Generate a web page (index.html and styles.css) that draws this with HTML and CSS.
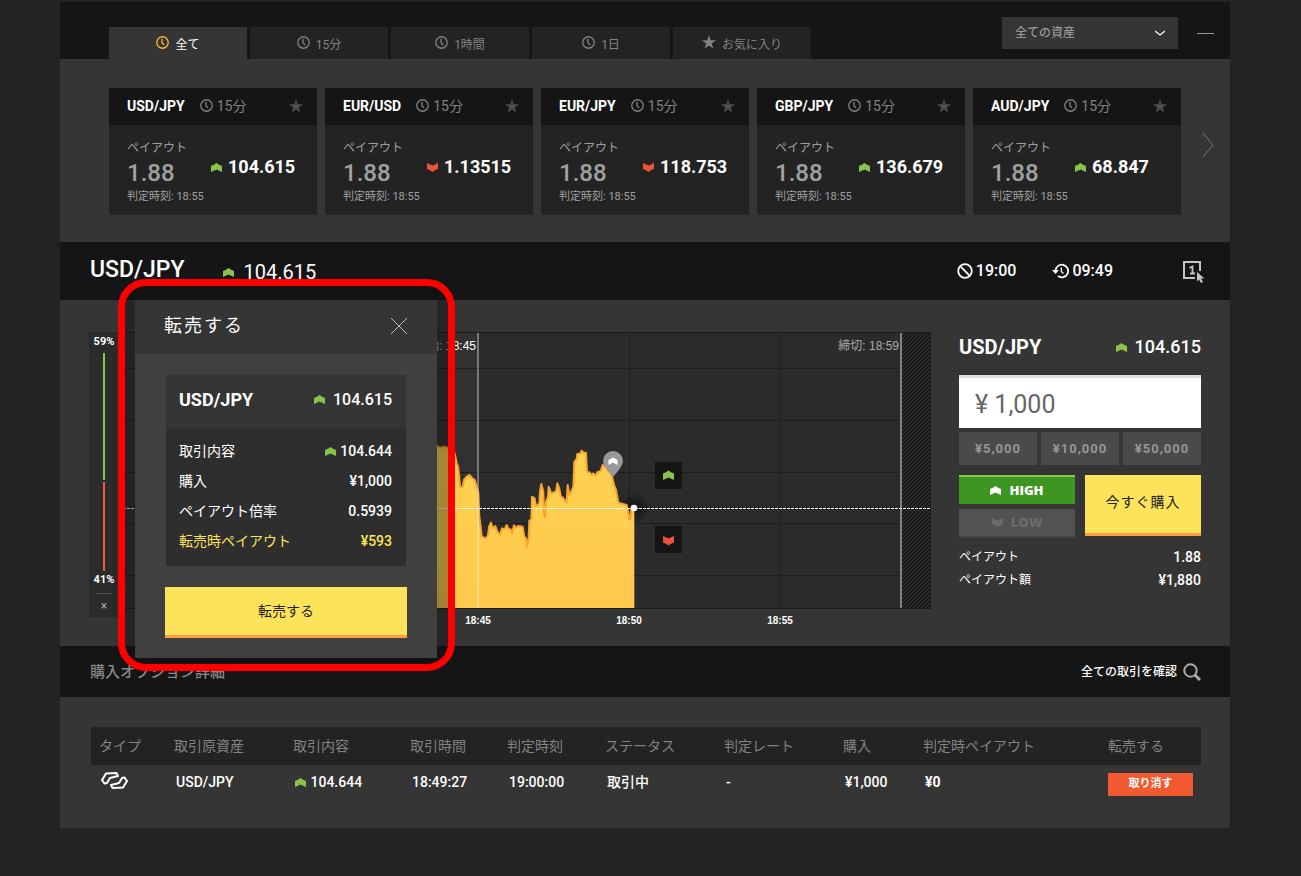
FILE: index.html
```html
<!DOCTYPE html>
<html lang="ja">
<head>
<meta charset="utf-8">
<title>USD/JPY 転売する</title>
<link rel="stylesheet" href="styles.css">
</head>
<body>
<svg class="defs" aria-hidden="true">
  <symbol id="up" viewBox="0 0 11 9"><path d="M0 3Q3 2 5.500 0Q8 2 11 3V9L5.500 6.500L0 9Z"/></symbol>
  <symbol id="down" viewBox="0 0 11 9"><path d="M0 0L5.500 2.500L11 0V6Q8 7 5.500 9Q3 7 0 6Z"/></symbol>
  <symbol id="clock" viewBox="0 0 12 12"><g fill="none" stroke="currentColor" stroke-width="1.200"><circle cx="6" cy="6" r="5.300"/><path d="M5.500 2.500V6L7.500 8.500"/></g></symbol>
  <symbol id="star" viewBox="0 0 14 14"><path d="M7 0L8.700 5.200H14L9.700 8.400L11.300 13.600L7 10.400L2.700 13.600L4.300 8.400L0 5.200H5.300Z"/></symbol>
</svg>
<div class="app">
  <header class="topbar">
    <nav class="tabs">
      <button class="tab active"><svg class="i12"><use href="#clock"/></svg><span>全て</span></button>
      <button class="tab"><svg class="i12"><use href="#clock"/></svg><span>15分</span></button>
      <button class="tab"><svg class="i12"><use href="#clock"/></svg><span>1時間</span></button>
      <button class="tab"><svg class="i12"><use href="#clock"/></svg><span>1日</span></button>
      <button class="tab"><svg class="i14"><use href="#star"/></svg><span>お気に入り</span></button>
    </nav>
    <div class="filter">
      <div class="select">
        <select aria-label="資産"><option>全ての資産</option></select>
        <svg class="chev" viewBox="0 0 10 6"><path d="M0 1L5 5L10 1"/></svg>
      </div>
      <button class="minimize" aria-label="最小化"><svg viewBox="0 0 17 2"><path d="M0 1.500H17"/></svg></button>
    </div>
  </header>

  <section class="assets">
    <div class="cards">
      <article class="card">
        <div class="card-head"><b>USD/JPY</b><span class="term"><svg class="i12"><use href="#clock"/></svg>15分</span><svg class="i14 fav"><use href="#star"/></svg></div>
        <div class="card-body"><div class="pay">ペイアウト</div><div class="rate">1.88</div><div class="price"><svg class="arrow up"><use href="#up"/></svg>104.615</div><div class="expiry">判定時刻: 18:55</div></div>
      </article>
      <article class="card">
        <div class="card-head"><b>EUR/USD</b><span class="term"><svg class="i12"><use href="#clock"/></svg>15分</span><svg class="i14 fav"><use href="#star"/></svg></div>
        <div class="card-body"><div class="pay">ペイアウト</div><div class="rate">1.88</div><div class="price"><svg class="arrow down"><use href="#down"/></svg>1.13515</div><div class="expiry">判定時刻: 18:55</div></div>
      </article>
      <article class="card">
        <div class="card-head"><b>EUR/JPY</b><span class="term"><svg class="i12"><use href="#clock"/></svg>15分</span><svg class="i14 fav"><use href="#star"/></svg></div>
        <div class="card-body"><div class="pay">ペイアウト</div><div class="rate">1.88</div><div class="price"><svg class="arrow down"><use href="#down"/></svg>118.753</div><div class="expiry">判定時刻: 18:55</div></div>
      </article>
      <article class="card">
        <div class="card-head"><b>GBP/JPY</b><span class="term"><svg class="i12"><use href="#clock"/></svg>15分</span><svg class="i14 fav"><use href="#star"/></svg></div>
        <div class="card-body"><div class="pay">ペイアウト</div><div class="rate">1.88</div><div class="price"><svg class="arrow up"><use href="#up"/></svg>136.679</div><div class="expiry">判定時刻: 18:55</div></div>
      </article>
      <article class="card">
        <div class="card-head"><b>AUD/JPY</b><span class="term"><svg class="i12"><use href="#clock"/></svg>15分</span><svg class="i14 fav"><use href="#star"/></svg></div>
        <div class="card-body"><div class="pay">ペイアウト</div><div class="rate">1.88</div><div class="price"><svg class="arrow up"><use href="#up"/></svg>68.847</div><div class="expiry">判定時刻: 18:55</div></div>
      </article>
    </div>
    <button class="next" aria-label="次へ"><svg viewBox="0 0 12 26"><path d="M1 1L11 13L1 25"/></svg></button>
  </section>

  <section class="pairbar">
    <h1>USD/JPY</h1>
    <div class="quote"><svg class="arrow up"><use href="#up"/></svg>104.615</div>
    <div class="times">
      <span class="time"><svg class="i16" viewBox="0 0 16 16"><g fill="none" stroke="#fff" stroke-width="1.800"><circle cx="8" cy="8" r="6.800"/><path d="M3.200 3.200L12.800 12.800"/></g></svg>19:00</span>
      <span class="time"><svg class="hist" viewBox="0 0 17 16"><path d="M3.500 8A6.300 6.300 0 1 1 6 13" fill="none" stroke="#fff" stroke-width="1.800"/><path d="M0 7H7L3.500 11Z" fill="#fff"/><path d="M9.300 4.500V8.500L11.500 10.500" fill="none" stroke="#fff" stroke-width="1.300"/></svg>09:49</span>
    </div>
    <button class="oneclick" aria-label="ワンクリック"><svg viewBox="0 0 22 24"><path d="M17 11V2H1V18H12" fill="none" stroke="#c4c4c4" stroke-width="2"/><path d="M6.500 8L9.500 6.500V14M7 13.500H12" fill="none" stroke="#c4c4c4" stroke-width="1.800"/><path d="M14 12L21.500 18.500H18L20 22L18 23L16 19.500L14 21.500Z" fill="#c4c4c4"/></svg></button>
  </section>

  <main class="trade">
    <div class="gauge">
      <b>59%</b>
      <span class="bar high"></span>
      <span class="bar low"></span>
      <b>41%</b>
      <button aria-label="閉じる">×</button>
    </div>
    <svg class="chart" viewBox="0 0 812 300" role="img" aria-label="USD/JPY チャート">
      <defs>
        <pattern id="hatch" width="4" height="4" patternUnits="userSpaceOnUse"><rect width="4" height="4" fill="#2f2f2f"/><path d="M-1 1L1 -1M0 4L4 0M3 5L5 3" stroke="#151515" stroke-width="1.400"/></pattern>
        <linearGradient id="area" x1="0" y1="0" x2="0" y2="1"><stop offset="0" stop-color="#ffd250"/><stop offset="1" stop-color="#ffc94c"/></linearGradient>
        <radialGradient id="glow"><stop offset="0" stop-color="#000" stop-opacity=".6"/><stop offset="1" stop-color="#000" stop-opacity="0"/></radialGradient>
      </defs>
      <rect width="812" height="276" fill="#2b2b2b"/>
      <rect width="359" height="276" fill="#313131"/>
      <path d="M0 36.500H782M0 88.500H782M0 140.500H782M0 191.500H782M0 243.500H782M510.500 0V276M661.500 0V276" stroke="#1e1e1e"/>
      <rect x="782" width="30" height="276" fill="url(#hatch)"/>
      <path d="M0 .5H811.500V276.500H0" fill="none" stroke="#1b1b1b"/>
      <ellipse cx="515" cy="176" rx="18" ry="16" fill="url(#glow)"/>
      <g transform="translate(311 -12) scale(.3333)">
        <path fill="url(#area)" d="M-600 864V380L22 378L30 384L42 380L60 385L74 400L80 430L84 440L87 465L90 500L98 502L102 480L110 470L118 465L126 474L134 480L140 500L145 520L148 590L152 620L155 650L168 655L174 645L178 618L183 608L188 625L196 618L202 635L210 645L216 625L224 628L230 615L236 628L242 628L246 640L252 616L258 624L264 618L278 620L283 650L288 655L291 680L296 655L298 602L304 598L306 530L314 535L318 560L328 550L330 515L334 492L340 515L342 580L345 592L348 545L354 530L356 500L364 520L378 515L382 490L388 505L392 528L400 535L410 548L413 495L418 525L426 510L430 500L433 425L440 418L442 402L452 400L455 392L461 398L468 398L471 455L480 458L484 465L490 460L496 467L504 455L512 454L518 435L530 445L545 465L552 495L558 510L565 548L590 555L595 575L598 598L602 596L604 565L613 564V864Z"/>
        <path fill="none" stroke="#f9a52c" stroke-width="6" stroke-linejoin="round" d="M-600 380L22 378L30 384L42 380L60 385L74 400L80 430L84 440L87 465L90 500L98 502L102 480L110 470L118 465L126 474L134 480L140 500L145 520L148 590L152 620L155 650L168 655L174 645L178 618L183 608L188 625L196 618L202 635L210 645L216 625L224 628L230 615L236 628L242 628L246 640L252 616L258 624L264 618L278 620L283 650L288 655L291 680L296 655L298 602L304 598L306 530L314 535L318 560L328 550L330 515L334 492L340 515L342 580L345 592L348 545L354 530L356 500L364 520L378 515L382 490L388 505L392 528L400 535L410 548L413 495L418 525L426 510L430 500L433 425L440 418L442 402L452 400L455 392L461 398L468 398L471 455L480 458L484 465L490 460L496 467L504 455L512 454L518 435L530 445L545 465L552 495L558 510L565 548L590 555L595 575L598 598L602 596L604 565L613 564"/>
      </g>
      <path d="M359 1V276" stroke="#fff" stroke-width="2" stroke-opacity=".35"/>
      <path d="M782 1V276" stroke="#828282" stroke-width="2"/>
      <path d="M0 176.500H812" stroke="#fff" stroke-dasharray="3 1"/>
      <path d="M494 145Q484 134 484 129A10 10 0 0 1 504 129Q504 134 494 145Z" fill="#98989d"/>
      <path d="M489.500 128L494 125.500L498.500 128V133L494 130.500L489.500 133Z" fill="#fff"/>
      <circle cx="515" cy="176" r="3.300" fill="#fff"/>
      <path d="M536 130H563V157H536ZM536 194H563V221H536Z" fill="#151515"/>
      <path d="M544 141.500Q547 140.500 549.500 138.500Q552 140.500 555 141.500V148L549.500 145.500L544 148Z" fill="#8bc34a"/>
      <path d="M544 204L549.500 206.500L555 204V210.500Q552 211.500 549.500 213.500Q547 211.500 544 210.500Z" fill="#e9523b"/>
      <g class="chart-text">
        <text x="357" y="18" text-anchor="end" fill="#aaa">開始: <tspan class="strong">18:45</tspan></text>
        <text x="780" y="18" text-anchor="end" fill="#aaa">締切: 18:59</text>
      </g>
      <g class="axis" text-anchor="middle">
        <text x="359" y="292">18:45</text><text x="510" y="292">18:50</text><text x="661" y="292">18:55</text>
      </g>
    </svg>

    <aside class="order">
      <div class="order-head"><h2>USD/JPY</h2><span class="order-price"><svg class="arrow up"><use href="#up"/></svg>104.615</span></div>
      <input class="amount" aria-label="購入金額" value="¥ 1,000">
      <div class="chips"><button>¥5,000</button><button>¥10,000</button><button>¥50,000</button></div>
      <div class="actions">
        <div class="sides">
          <button class="side high"><svg class="arrow"><use href="#up"/></svg>HIGH</button>
          <button class="side low"><svg class="arrow"><use href="#down"/></svg>LOW</button>
        </div>
        <button class="buy">今すぐ購入</button>
      </div>
      <dl class="summary">
        <div><dt>ペイアウト</dt><dd>1.88</dd></div>
        <div><dt>ペイアウト額</dt><dd>¥1,880</dd></div>
      </dl>
    </aside>

    <div class="ring">
      <div class="modal" role="dialog" aria-label="転売する">
        <div class="modal-head"><h2>転売する</h2><button aria-label="閉じる"><svg viewBox="0 0 18 18"><path d="M1 1L17 17M17 1L1 17"/></svg></button></div>
        <div class="modal-body">
          <div class="deal">
            <div class="deal-head"><b>USD/JPY</b><span class="deal-price"><svg class="arrow up"><use href="#up"/></svg>104.615</span></div>
            <dl>
              <div><dt>取引内容</dt><dd><svg class="arrow up"><use href="#up"/></svg>104.644</dd></div>
              <div><dt>購入</dt><dd>¥1,000</dd></div>
              <div><dt>ペイアウト倍率</dt><dd>0.5939</dd></div>
              <div class="gold"><dt>転売時ペイアウト</dt><dd>¥593</dd></div>
            </dl>
          </div>
          <button class="sell">転売する</button>
        </div>
      </div>
    </div>
  </main>

  <section class="optionsbar">
    <h2>購入オプション詳細</h2>
    <a href="#">全ての取引を確認<svg class="search" viewBox="0 0 18 18"><circle cx="7.500" cy="7.500" r="6.200"/><path d="M12 12L17 17" stroke-width="3"/></svg></a>
  </section>

  <section class="history">
    <table>
      <colgroup><col class="c1"><col class="c2"><col class="c3"><col class="c4"><col class="c5"><col class="c6"><col class="c7"><col class="c8"><col class="c9"><col class="c10"></colgroup>
      <thead><tr><th>タイプ</th><th>取引原資産</th><th>取引内容</th><th>取引時間</th><th>判定時刻</th><th>ステータス</th><th>判定レート</th><th>購入</th><th>判定時ペイアウト</th><th>転売する</th></tr></thead>
      <tbody><tr>
        <td><svg class="type" viewBox="0 0 27 17"><path d="M1 8L5 1.500L15.500 1L17 4L9 6L6 11L3.500 11.500ZM26 9L22 15.500L11.500 16L10 13L18 11L21 6L23.500 5.500Z"/></svg></td>
        <td>USD/JPY</td><td><svg class="arrow up"><use href="#up"/></svg> 104.644</td><td>18:49:27</td><td>19:00:00</td><td>取引中</td><td>-</td><td>¥1,000</td><td class="total">¥0</td><td class="act"><button>取り消す</button></td>
      </tr></tbody>
    </table>
  </section>
</div>
</body>
</html>
```
FILE: styles.css
```css
* { box-sizing: border-box; }
body {
  margin: 0;
  padding: 2px 71px 0 60px;
  min-height: 100vh;
  background: #232323;
  color: #fff;
  font-family: Roboto, "Noto Sans CJK JP", sans-serif;
  font-size: 14px;
  line-height: 20px;
}
h1, h2, dl, dd { margin: 0; }
button, input, select { font: inherit; color: inherit; border: 0; border-radius: 0; padding: 0; background: none; }
button { cursor: pointer; }
svg { display: block; fill: currentColor; }
.defs { position: absolute; width: 0; height: 0; }
.i12 { width: 13px; height: 13px; }
.i14 { width: 14px; height: 14px; }
.i16 { width: 16px; height: 16px; }
.arrow { width: 11px; height: 9px; flex: none; }
.up { color: #8bc34a; }
.down { color: #e9523b; }

.topbar { display: flex; justify-content: space-between; align-items: flex-end; height: 57px; padding: 0 16px 0 49px; background: #151515; }
.tabs { display: flex; gap: 3px; }
.tab { display: flex; align-items: center; justify-content: center; gap: 6px; width: 138px; height: 32px; background: #232323; color: #828282; font-size: 12px; }
.tab svg { margin-bottom: 2px; }
.tab span { padding-top: 3px; }
.tab.active { background: #353535; color: #fff; }
.tab.active svg { color: #f4b836; }
.filter { display: flex; align-items: center; gap: 19px; padding-bottom: 10px; }
.select { position: relative; width: 176px; }
.select select { appearance: none; display: block; width: 100%; height: 32px; padding: 0 13px; background: #353535; color: #aaa; font-size: 12px; }
.chev { position: absolute; right: 13px; top: 13px; width: 10px; height: 6px; fill: none; stroke: #fff; stroke-width: 1.3; pointer-events: none; }
.minimize svg { width: 17px; height: 2px; stroke: #999; }

.assets { display: grid; grid-template-columns: 1fr 49px; align-items: center; padding: 29px 0 27px 49px; background: #353535; }
.cards { display: grid; grid-template-columns: repeat(5, 1fr); gap: 8px; }
.card { background: #232323; }
.card-head { display: flex; align-items: center; height: 37px; padding: 0 14px 2px 18px; background: #151515; }
.term { display: flex; align-items: center; gap: 4px; margin-left: 15px; color: #828282; }
.fav { margin-left: auto; color: #4d4d4d; }
.card-body { display: grid; grid-template-columns: 1fr 85px; grid-template-rows: 20px 28px 20px; height: 90px; padding: 13px 21px 9px 18px; color: #a0a0a0; }
.pay { grid-column: 1 / 3; font-size: 12px; }
.rate { font-size: 24px; line-height: 30px; font-weight: 500; }
.price { display: flex; align-items: center; gap: 6px; height: 18px; color: #fff; font-size: 18px; font-weight: 700; }
.expiry { grid-column: 1 / 3; font-size: 11px; line-height: 22px; }
.next svg { width: 12px; height: 26px; margin: 0 auto; fill: none; stroke: #777; }
.next { padding: 0 0 14px 5px; }

.pairbar { display: flex; align-items: center; height: 58px; padding: 0 25px 0 30px; background: #151515; }
.pairbar h1 { font-size: 23px; line-height: 30px; font-weight: 500; padding-bottom: 2px; }
.quote { display: flex; align-items: center; gap: 9px; margin-left: 39px; padding-top: 2px; font-size: 20px; font-weight: 400; }
.times { display: flex; gap: 36px; margin-left: auto; font-size: 16px; font-weight: 500; }
.time { display: flex; align-items: center; gap: 3px; }
.hist { width: 17px; height: 16px; }
.oneclick { margin-left: 70px; padding-top: 2px; }
.oneclick svg { width: 22px; height: 24px; }

.trade { position: relative; display: grid; grid-template-columns: 30px 1fr 270px; align-items: start; padding: 32px 29px 14px; background: #353535; }
.gauge { display: flex; flex-direction: column; align-items: center; height: 285px; background: #2b2b2b; font-size: 11px; }
.gauge b { line-height: 20px; }
.bar { width: 2px; }
.bar.high { flex: 127; background: #8bc34a; margin: 1px 0 2px; }
.bar.low { flex: 89; background: #f15a30; margin-bottom: -1px; }
.gauge button { width: 14px; height: 24px; margin-top: 3px; border-top: 1px solid #555; color: #aaa; font-size: 12px; line-height: 20px; }
.chart { width: 100%; height: auto; }
.chart-text { font-family: "Liberation Sans", "Noto Sans CJK JP", sans-serif; font-size: 12px; }
.strong { fill: #fff; font-weight: 500; }
.axis { font-family: "Liberation Sans", sans-serif; font-size: 10px; font-weight: 700; fill: #fff; }

.order { margin-left: 28px; }
.order-head { display: flex; align-items: center; justify-content: space-between; height: 30px; margin-bottom: 13px; }
.order h2 { font-size: 20px; font-weight: 700; }
.order-price { display: flex; align-items: center; gap: 8px; font-size: 18px; font-weight: 500; }
.amount { display: block; width: 100%; height: 53px; padding: 3px 16px 0; border-top: 3px solid #ddd; background: #fff; color: #666; font-size: 25px; }
.chips { display: grid; grid-template-columns: repeat(3, 1fr); gap: 4px; margin: 4px 0 10px; }
.chips button { height: 33px; background: #4a4a4a; color: #969696; font-size: 13px; font-weight: 700; letter-spacing: 1px; }
.actions { display: grid; grid-template-columns: 1fr 1fr; gap: 10px; align-items: start; }
.sides { display: grid; gap: 5px; }
.side { display: flex; align-items: center; justify-content: center; gap: 8px; height: 29px; padding-bottom: 1px; font-family: "Open Sans", sans-serif; font-size: 13px; font-weight: 800; }
.side.high { background: #3c9621; border-top: 2px solid #8bc34a; }
.side.low { background: #525252; border-bottom: 2px solid #444; color: #6b6b6b; }
.buy { height: 61px; padding-bottom: 5px; background: #fde35a; border-bottom: 3px solid #ff9d43; color: #222; font-size: 14px; letter-spacing: 1px; }
.summary { margin-top: 8px; font-size: 12px; }
.summary div { display: flex; justify-content: space-between; line-height: 23px; }
.summary dd { font-size: 14px; font-weight: 500; }

.ring { position: absolute; z-index: 2; left: 58px; top: -21px; padding: 14px 11px 6px 10px; border: 7px solid #f00; border-radius: 28px; background: rgba(12, 12, 12, .38); }
.modal { width: 302px; background: #404040; }
.modal-head { display: flex; align-items: center; justify-content: space-between; height: 54px; padding: 0 29px 2px 29px; background: #353535; }
.modal-head h2 { font-size: 18px; font-weight: 400; letter-spacing: 2px; }
.modal-head svg { width: 18px; height: 18px; fill: none; stroke: #bbb; }
.modal-body { padding: 21px 30px 20px; }
.deal { margin: 0 1px 21px; background: #2e2e2e; }
.deal-head { display: flex; align-items: center; justify-content: space-between; height: 53px; padding: 0 14px 4px 13px; background: #353535; font-size: 18px; }
.deal-price { display: flex; align-items: center; gap: 8px; font-size: 16px; font-weight: 500; }
.deal dl { padding: 8px 14px 10px 13px; }
.deal dl div { display: flex; justify-content: space-between; line-height: 30px; }
.deal dd { display: flex; align-items: center; gap: 4px; font-weight: 500; }
.gold { color: #fde35a; }
.sell { display: block; width: 100%; height: 51px; background: #fde35a; border-bottom: 3px solid #ff9d43; color: #222; }

.optionsbar { display: flex; align-items: center; justify-content: space-between; height: 51px; padding: 0 29px 0 30px; background: #151515; }
.optionsbar h2 { font-size: 15px; font-weight: 500; color: #888; }
.optionsbar a { display: flex; align-items: center; gap: 6px; color: #fff; font-size: 12px; font-weight: 500; text-decoration: none; }
.search { width: 18px; height: 18px; fill: none; stroke: #aaa; stroke-width: 2; }

.history { padding: 30px 29px 27px 31px; background: #353535; }
table { width: 100%; table-layout: fixed; border-collapse: collapse; }
th { height: 38px; padding: 0 0 0 8px; background: #232323; color: #828282; font-weight: 400; text-align: left; white-space: nowrap; }
td { height: 36px; padding: 0 0 2px 10px; font-weight: 500; white-space: nowrap; }
td .arrow { display: inline-block; margin-right: 1px; }
.type { width: 27px; height: 17px; margin-bottom: 4px; fill: none; stroke: #fff; stroke-width: 2; stroke-linejoin: round; }
.total { font-weight: 700; }
.act { padding: 2px 8px 0; }
.act button { display: block; width: 100%; height: 23px; background: #f15a30; font-size: 11px; font-weight: 700; }
.c1 { width: 75px; } .c2 { width: 119px; } .c3 { width: 117px; } .c4 { width: 97px; } .c5 { width: 98px; }
.c6 { width: 119px; } .c7 { width: 119px; } .c8 { width: 80px; } .c9 { width: 185px; } .c10 { width: 101px; }
```
